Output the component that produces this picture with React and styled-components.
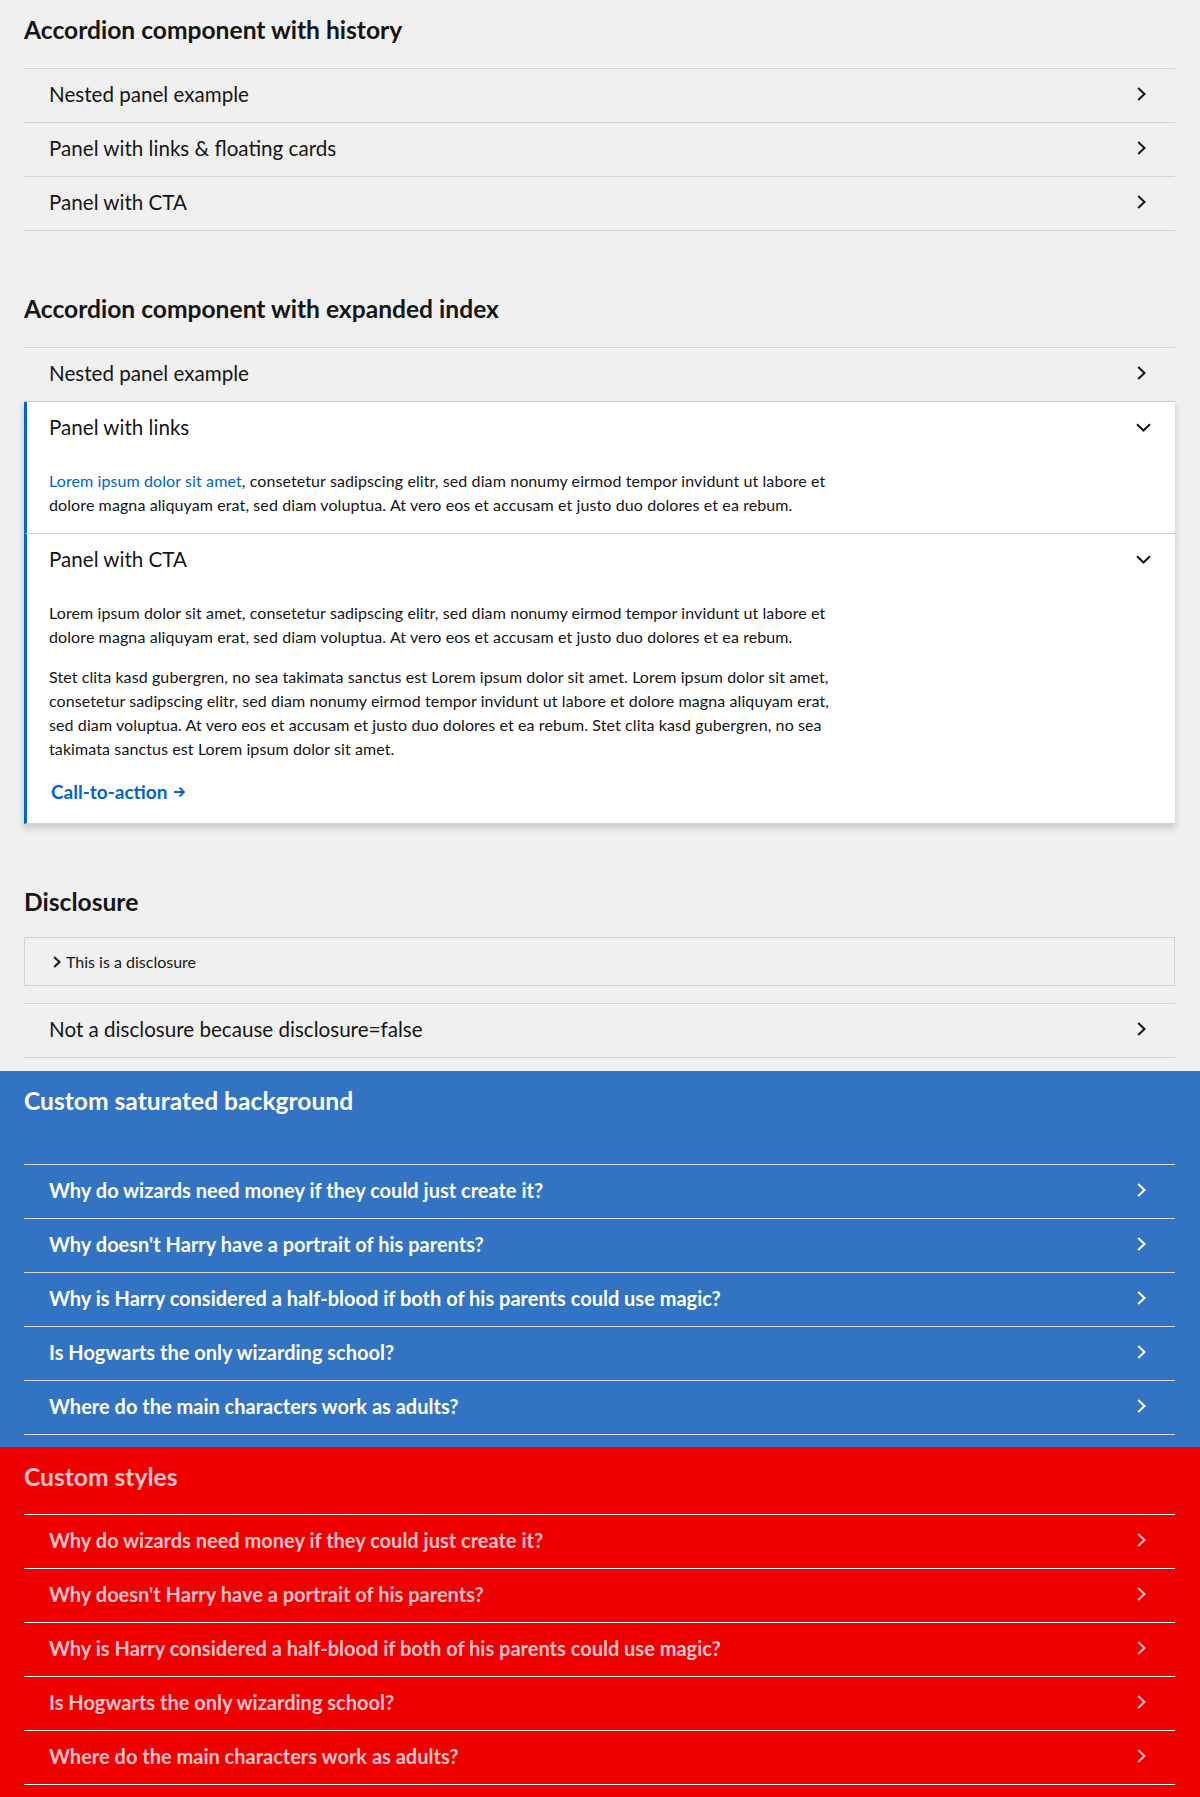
import React from "react";
import styled, { createGlobalStyle, css } from "styled-components";

const GlobalStyle = createGlobalStyle`
  html, body { margin: 0; padding: 0; }
  body {
    background: #f0f0f0;
    font-family: Lato, "Liberation Sans", sans-serif;
    color: #151515;
  }
  * { box-sizing: border-box; }
`;

const themes = {
  light: { bg: "#f0f0f0", title: "#151515", text: "#151515", line: "#d2d2d2", icon: "#151515", weight: 400, titleWeight: 700 },
  saturated: { bg: "#3373c4", title: "#ffffff", text: "#ffffff", line: "#dcd8cc", icon: "#ffffff", weight: 700, titleWeight: 700 },
  custom: { bg: "#ee0000", title: "#ffc0cb", text: "#ffc0cb", line: "#ffffff", icon: "#ffc0cb", weight: 700, titleWeight: 700 },
};

const Page = styled.div`
  display: flex;
  flex-direction: column;
`;

const Section = styled.section`
  background: ${(p) => themes[p.$variant].bg};
  padding: 14px 25px ${(p) => p.$bottom}px 24px;
`;

const SectionTitle = styled.h2`
  margin: 0 0 ${(p) => p.$gap}px;
  font-size: 24.6px;
  line-height: 31px;
  font-weight: ${(p) => themes[p.$variant].titleWeight};
  color: ${(p) => themes[p.$variant].title};
`;

const List = styled.div`
  border-top: 1px solid ${(p) => themes[p.$variant].line};
`;

const Item = styled.div`
  border-bottom: 1px solid ${(p) => themes[p.$variant].line};
  ${(p) =>
    p.$expanded &&
    css`
      background: #ffffff;
      border-left: 3px solid #0066cc;
      box-shadow: 0 4px 6px 1px rgba(0, 0, 0, 0.14);
    `}
`;

const Toggle = styled.button`
  all: unset;
  box-sizing: border-box;
  width: 100%;
  height: 53px;
  display: flex;
  align-items: center;
  justify-content: space-between;
  padding: 0 ${(p) => (p.$expanded ? 22 : 24)}px 3px ${(p) => (p.$expanded ? 22 : 25)}px;
  font-family: Lato, "Liberation Sans", sans-serif;
  font-size: ${(p) => (p.$variant === "light" ? 20.6 : 20)}px;
  font-weight: ${(p) => themes[p.$variant].weight};
  color: ${(p) => themes[p.$variant].text};
  cursor: pointer;
`;

const IconBox = styled.span`
  width: 20px;
  display: flex;
  justify-content: center;
  align-items: center;
  color: ${(p) => themes[p.$variant].icon};
`;

const Chevron = ({ down }) =>
  down ? (
    <svg width="15" height="9" viewBox="0 0 15 9" fill="none">
      <path d="M1 1.2 L7.5 7.5 L14 1.2" stroke="currentColor" strokeWidth="2" />
    </svg>
  ) : (
    <svg width="9" height="14" viewBox="0 0 9 14" fill="none">
      <path d="M1.2 1 L7.5 7 L1.2 13" stroke="currentColor" strokeWidth="2" />
    </svg>
  );

const Body = styled.div`
  display: flex;
  flex-direction: column;
  gap: 16px;
  padding: 14px 22px ${(p) => p.$bottom}px;
`;

const Paragraph = styled.p`
  margin: 0;
  font-size: 16px;
  letter-spacing: 0.1px;
  line-height: 24px;
  max-width: 880px;
  color: #151515;
`;

const InlineLink = styled.a`
  color: #0066cc;
  text-decoration: none;
`;

const Cta = styled.a`
  margin-top: 3px;
  display: inline-flex;
  align-items: center;
  gap: 6px;
  align-self: flex-start;
  font-size: 19px;
  line-height: 24px;
  font-weight: 700;
  color: #0066cc;
  text-decoration: none;
  padding-left: 2px;
`;

const Disclosure = styled.div`
  height: 49px;
  margin-bottom: 17px;
  border: 1px solid #d2d2d2;
  display: flex;
  align-items: center;
  gap: 5px;
  padding-left: 28px;
  font-size: 16px;
  color: #151515;
`;

const Accordion = ({ variant = "light", items }) => (
  <List $variant={variant}>
    {items.map((it) => (
      <Item key={it.title} $variant={variant} $expanded={!!it.body}>
        <Toggle $variant={variant} $expanded={!!it.body}>
          <span>{it.title}</span>
          <IconBox $variant={variant}>
            <Chevron down={!!it.body} />
          </IconBox>
        </Toggle>
        {it.body}
      </Item>
    ))}
  </List>
);

const questions = [
  "Why do wizards need money if they could just create it?",
  "Why doesn't Harry have a portrait of his parents?",
  "Why is Harry considered a half-blood if both of his parents could use magic?",
  "Is Hogwarts the only wizarding school?",
  "Where do the main characters work as adults?",
];

export default function App() {
  return (
    <Page>
      <GlobalStyle />
      <Section $variant="light" $bottom={48}>
        <SectionTitle $variant="light" $gap={23}>Accordion component with history</SectionTitle>
        <Accordion
          items={[
            { title: "Nested panel example" },
            { title: "Panel with links & floating cards" },
            { title: "Panel with CTA" },
          ]}
        />
      </Section>

      <Section $variant="light" $bottom={48}>
        <SectionTitle $variant="light" $gap={23}>Accordion component with expanded index</SectionTitle>
        <Accordion
          items={[
            { title: "Nested panel example" },
            {
              title: "Panel with links",
              body: (
                <Body $bottom={16}>
                  <Paragraph>
                    <InlineLink href="#">Lorem ipsum dolor sit amet</InlineLink>, consetetur sadipscing elitr, sed diam nonumy eirmod tempor invidunt ut labore et
                    <br />
                    dolore magna aliquyam erat, sed diam voluptua. At vero eos et accusam et justo duo dolores et ea rebum.
                  </Paragraph>
                </Body>
              ),
            },
            {
              title: "Panel with CTA",
              body: (
                <Body $bottom={19}>
                  <Paragraph>
                    Lorem ipsum dolor sit amet, consetetur sadipscing elitr, sed diam nonumy eirmod tempor invidunt ut labore et
                    <br />
                    dolore magna aliquyam erat, sed diam voluptua. At vero eos et accusam et justo duo dolores et ea rebum.
                  </Paragraph>
                  <Paragraph>
                    Stet clita kasd gubergren, no sea takimata sanctus est Lorem ipsum dolor sit amet. Lorem ipsum dolor sit amet,
                    <br />
                    consetetur sadipscing elitr, sed diam nonumy eirmod tempor invidunt ut labore et dolore magna aliquyam erat,
                    <br />
                    sed diam voluptua. At vero eos et accusam et justo duo dolores et ea rebum. Stet clita kasd gubergren, no sea
                    <br />
                    takimata sanctus est Lorem ipsum dolor sit amet.
                  </Paragraph>
                  <Cta href="#">
                    Call-to-action
                    <svg width="13" height="12" viewBox="0 0 13 12" fill="none">
                      <path d="M1 6 H11 M6.5 1.5 L11 6 L6.5 10.5" stroke="currentColor" strokeWidth="1.8" />
                    </svg>
                  </Cta>
                </Body>
              ),
            },
          ]}
        />
      </Section>

      <Section $variant="light" $bottom={13}>
        <SectionTitle $variant="light" $gap={20}>Disclosure</SectionTitle>
        <Disclosure>
          <svg width="8" height="12" viewBox="0 0 8 12" fill="none">
            <path d="M1.2 1 L6.5 6 L1.2 11" stroke="#151515" strokeWidth="2" />
          </svg>
          <span>This is a disclosure</span>
        </Disclosure>
        <Accordion items={[{ title: "Not a disclosure because disclosure=false" }]} />
      </Section>

      <Section $variant="saturated" $bottom={12}>
        <SectionTitle $variant="saturated" $gap={48}>Custom saturated background</SectionTitle>
        <Accordion variant="saturated" items={questions.map((q) => ({ title: q }))} />
      </Section>

      <Section $variant="custom" $bottom={14}>
        <SectionTitle $variant="custom" $gap={22}>Custom styles</SectionTitle>
        <Accordion variant="custom" items={questions.map((q) => ({ title: q }))} />
      </Section>
    </Page>
  );
}
